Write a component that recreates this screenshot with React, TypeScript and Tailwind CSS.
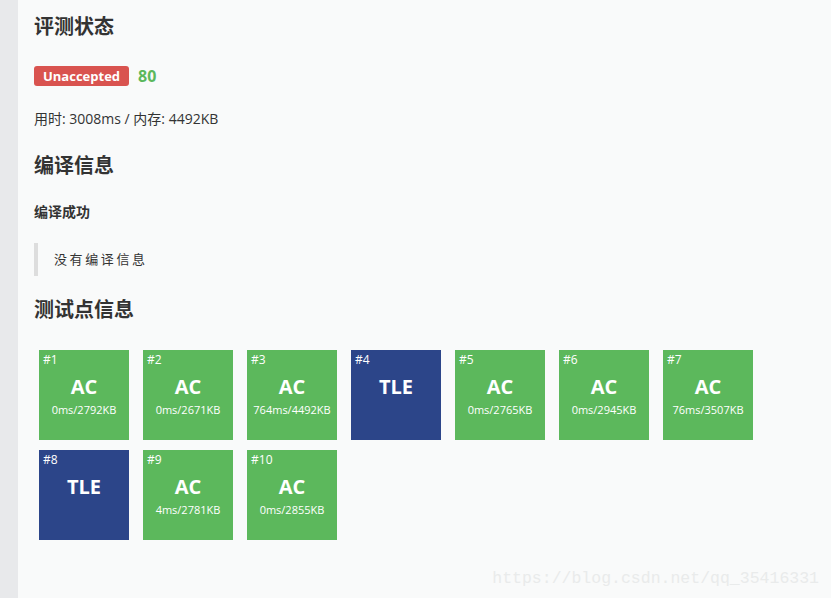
import React from "react";

type Case = { id: number; status: "AC" | "TLE"; info?: string };

const cases: Case[] = [
  { id: 1, status: "AC", info: "0ms/2792KB" },
  { id: 2, status: "AC", info: "0ms/2671KB" },
  { id: 3, status: "AC", info: "764ms/4492KB" },
  { id: 4, status: "TLE" },
  { id: 5, status: "AC", info: "0ms/2765KB" },
  { id: 6, status: "AC", info: "0ms/2945KB" },
  { id: 7, status: "AC", info: "76ms/3507KB" },
  { id: 8, status: "TLE" },
  { id: 9, status: "AC", info: "4ms/2781KB" },
  { id: 10, status: "AC", info: "0ms/2855KB" },
];

const font = { fontFamily: '"Open Sans", "Noto Sans CJK SC", sans-serif' };

function CaseBox({ c }: { c: Case }) {
  return (
    <div
      className={`relative w-[90px] h-[90px] text-white flex flex-col items-center ${
        c.status === "AC" ? "bg-[#5cb85c]" : "bg-[#2c4589]"
      }`}
    >
      <span className="absolute left-[4px] top-[2px] text-[12px] leading-[16px]">#{c.id}</span>
      <span className="mt-[25px] text-[20px] leading-[24px] font-bold">{c.status}</span>
      {c.info && <span className="mt-[4px] text-[11px] leading-[14px]">{c.info}</span>}
    </div>
  );
}

export default function App() {
  return (
    <div className="relative flex h-[598px] overflow-hidden text-[#333]" style={font}>
      <div className="w-[18px] shrink-0 bg-[#e8e9eb]" />
      <div className="flex-1 bg-[#f9fafa] pl-4">
        <h2 className="pt-[13px] text-[20px] leading-[28px] font-bold">评测状态</h2>

        <div className="mt-[25px] flex items-center h-[20px]">
          <span className="h-[20px] px-[9px] rounded-[3px] bg-[#d9534f] text-white text-[13px] leading-[20px] font-bold">
            Unaccepted
          </span>
          <span className="ml-[9px] text-[16px] font-bold text-[#5cb85c]">80</span>
        </div>

        <p className="mt-[23px] text-[14px] leading-[20px]">用时: 3008ms / 内存: 4492KB</p>

        <h2 className="mt-[23px] text-[20px] leading-[28px] font-bold">编译信息</h2>

        <p className="mt-[22px] text-[14px] leading-[20px] font-bold">编译成功</p>

        <div className="mt-[21px] h-[33px] border-l-4 border-[#dddddd] pl-[16px] flex items-center">
          <span className="text-[13px] tracking-[2.6px] text-[#333]">没有编译信息</span>
        </div>

        <h2 className="mt-[20px] text-[20px] leading-[28px] font-bold">测试点信息</h2>

        <div className="mt-[26px] ml-[5px] flex flex-wrap gap-x-[14px] gap-y-[10px]">
          {cases.map((c) => (
            <CaseBox key={c.id} c={c} />
          ))}
        </div>
      </div>

      <span
        className="absolute right-[12px] bottom-[9px] text-[16.5px] leading-[20px] text-[#e9ebeb]"
        style={{ fontFamily: '"Liberation Mono", monospace' }}
      >
        https://blog.csdn.net/qq_35416331
      </span>
    </div>
  );
}
